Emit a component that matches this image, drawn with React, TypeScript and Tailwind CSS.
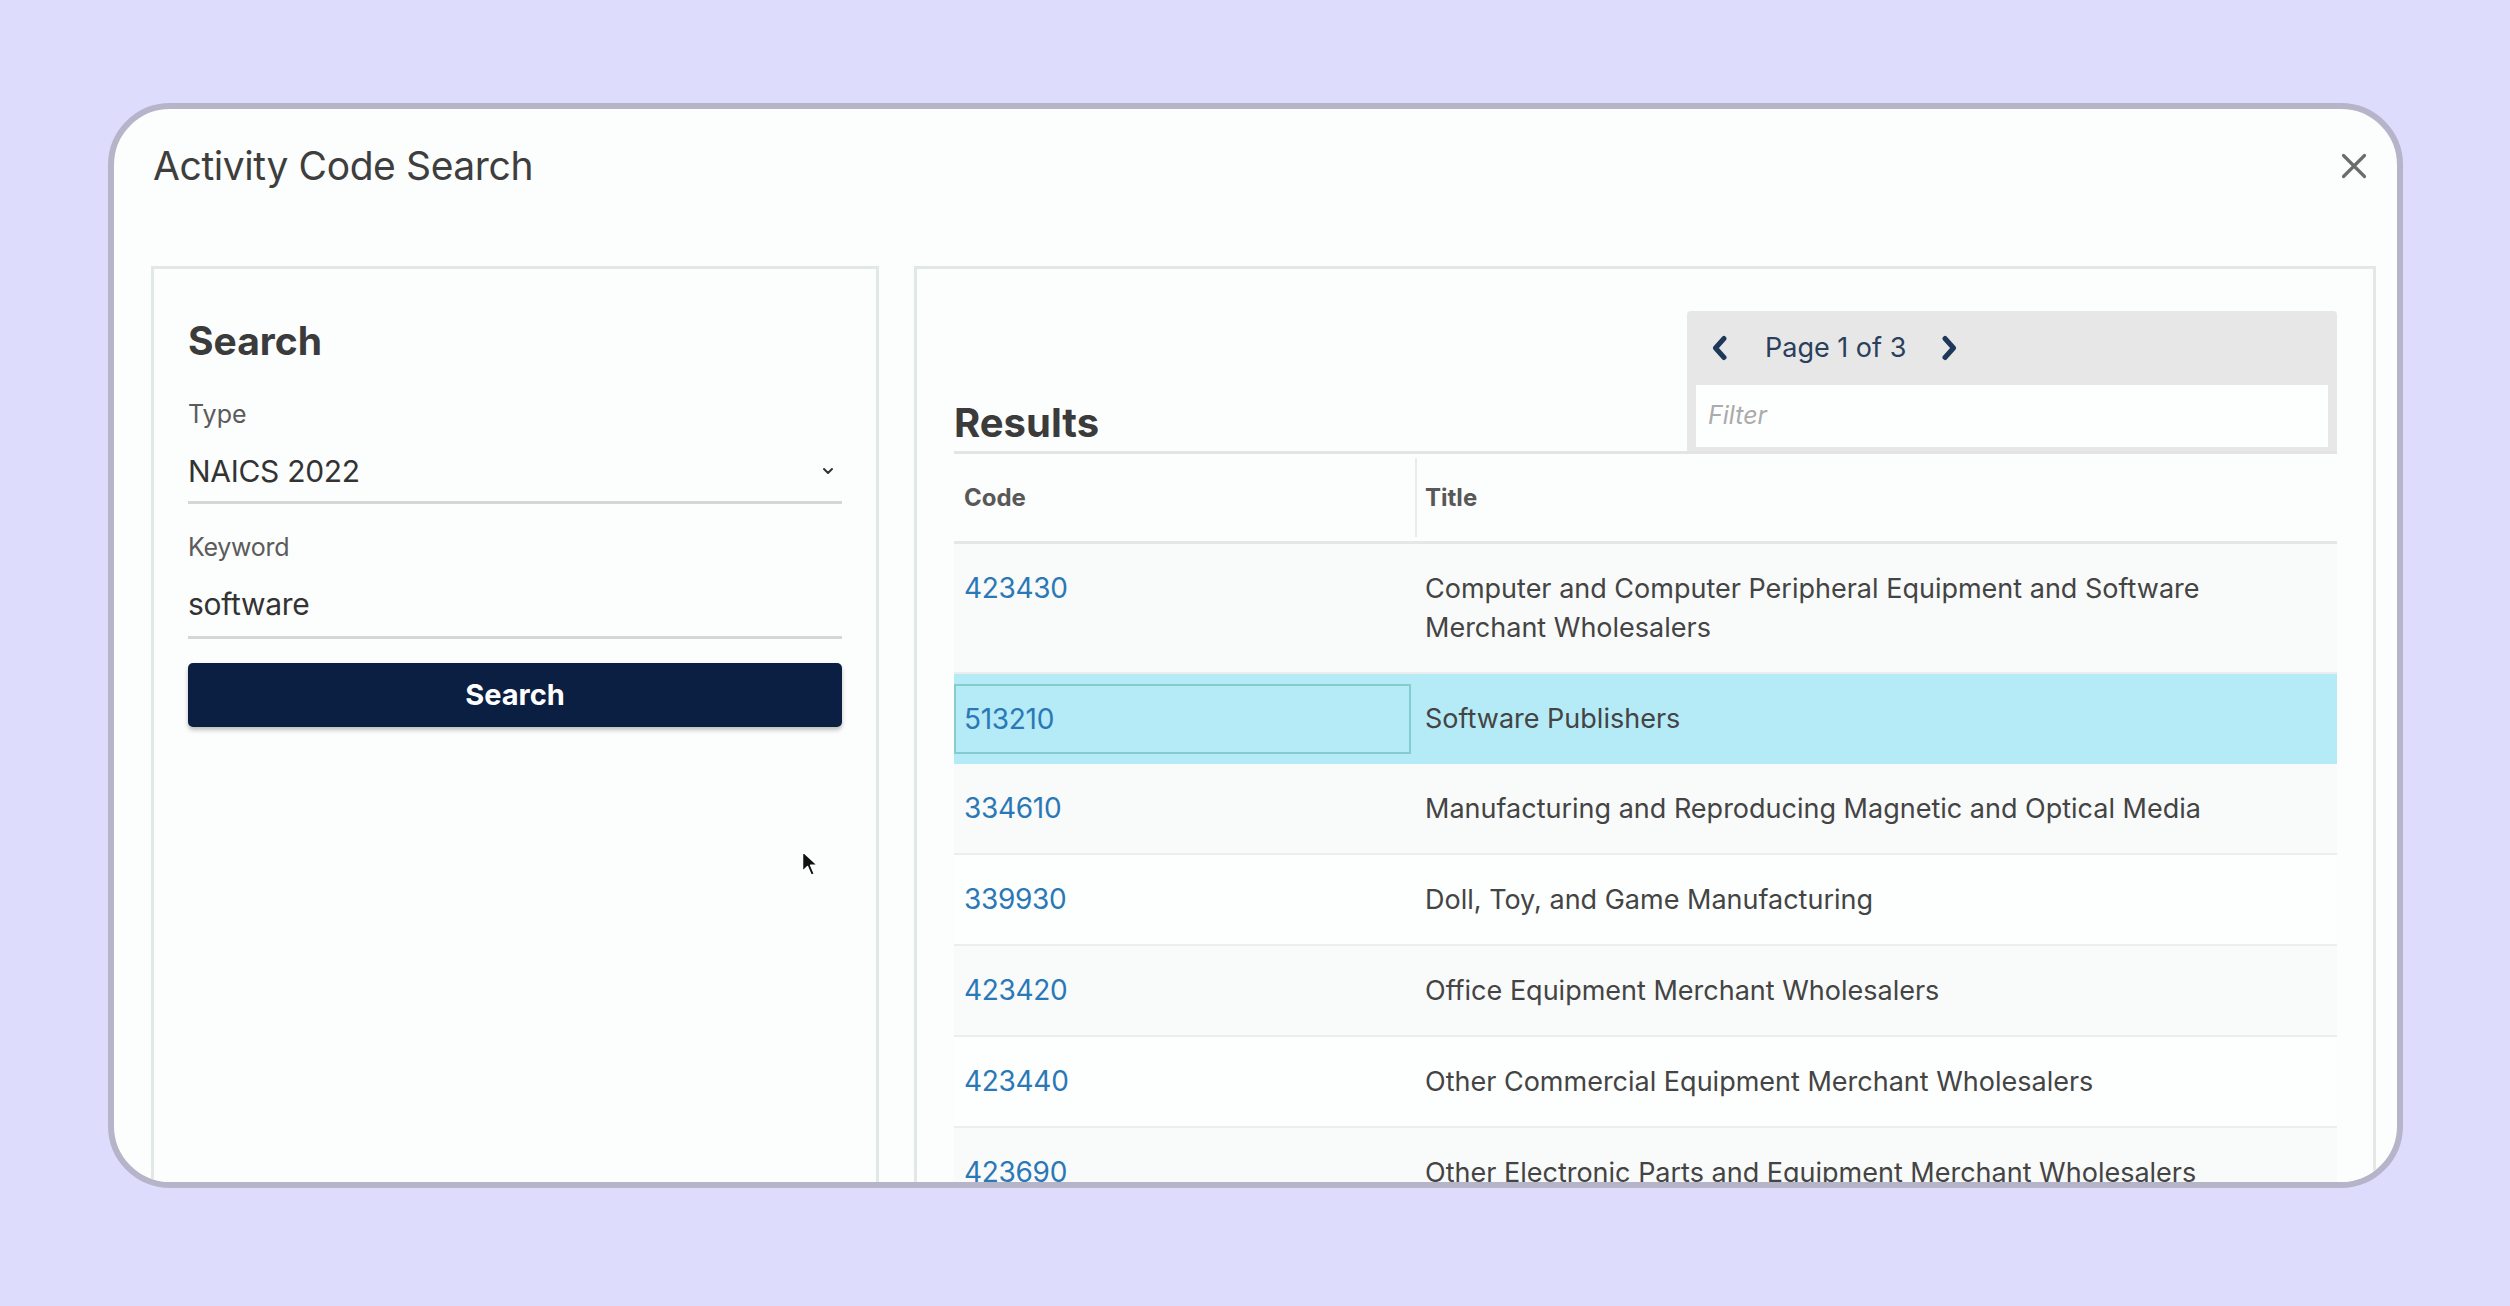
import React from "react";

const rows = [
  { code: "423430", title: "Computer and Computer Peripheral Equipment and Software Merchant Wholesalers" },
  { code: "513210", title: "Software Publishers", active: true },
  { code: "334610", title: "Manufacturing and Reproducing Magnetic and Optical Media" },
  { code: "339930", title: "Doll, Toy, and Game Manufacturing" },
  { code: "423420", title: "Office Equipment Merchant Wholesalers" },
  { code: "423440", title: "Other Commercial Equipment Merchant Wholesalers" },
  { code: "423690", title: "Other Electronic Parts and Equipment Merchant Wholesalers" },
];

function Chevron({ dir }: { dir: "left" | "right" }) {
  return (
    <svg width="20" height="26" viewBox="0 0 20 26" fill="none">
      {dir === "left" ? (
        <path d="M14 3.5 L5.5 13 L14 22.5" stroke="#1f385a" strokeWidth="5" strokeLinecap="round" strokeLinejoin="round" />
      ) : (
        <path d="M6 3.5 L14.5 13 L6 22.5" stroke="#1f385a" strokeWidth="5" strokeLinecap="round" strokeLinejoin="round" />
      )}
    </svg>
  );
}

export default function App() {
  return (
    <div className="w-[2510px] h-[1306px] bg-[#dddcfd] overflow-hidden relative font-['Inter',sans-serif]">
      <div className="ml-[108px] mt-[103px] w-[2295px] h-[1085px] border-[6px] border-[#b5b4c9] rounded-[62px] bg-[#fcfdfd] overflow-hidden flex flex-col">
        {/* Header */}
        <div className="flex items-start justify-between pl-[39px] pr-[30px] pt-[33px]">
          <div className="text-[39px] tracking-[-0.4px] leading-[48px] text-[#3e3e3e]">Activity Code Search</div>
          <svg className="mt-[11px]" width="26" height="26" viewBox="0 0 26 26">
            <path d="M2.5 2.5 L23.5 23.5 M23.5 2.5 L2.5 23.5" stroke="#6c6c6c" strokeWidth="3.2" strokeLinecap="round" />
          </svg>
        </div>

        {/* Panels */}
        <div className="mt-[76px] flex gap-[35px] pl-[37px] pr-[21px]">
          {/* Left panel */}
          <div className="w-[728px] h-[1000px] shrink-0 border-[3px] border-[#e1e8e6] bg-[#fcfdfd] px-[34px] pt-[48px]">
            <div className="text-[39px] font-bold leading-[48px] text-[#3b3b3b]">Search</div>
            <div className="mt-[34px] text-[25px] leading-[30px] text-[#5b5b5b]">Type</div>
            <div className="mt-[24px] pb-[12px] border-b-[3px] border-[#d6d6d6] flex items-center justify-between">
              <span className="text-[30px] tracking-[-0.3px] leading-[36px] text-[#333333]">NAICS 2022</span>
              <svg className="mr-[8px]" width="12" height="8" viewBox="0 0 12 8">
                <path d="M2 2 L6 6 L10 2" stroke="#333" strokeWidth="2" fill="none" strokeLinecap="round" strokeLinejoin="round" />
              </svg>
            </div>
            <div className="mt-[28px] text-[25px] tracking-[-0.3px] leading-[30px] text-[#5b5b5b]">Keyword</div>
            <div className="mt-[24px] pb-[14px] border-b-[3px] border-[#d6d6d6] text-[30px] tracking-[-0.3px] leading-[36px] text-[#333333]">software</div>
            <div className="mt-[24px] h-[64px] rounded-[5px] bg-[#0b1f42] shadow-[0_3px_4px_rgba(0,0,0,0.25)] flex items-center justify-center text-white text-[29px] font-bold">
              Search
            </div>
          </div>

          {/* Right panel */}
          <div className="w-[1462px] h-[1000px] shrink-0 border-[3px] border-[#e1e8e6] bg-[#fcfdfd] pl-[37px] pr-[36px] pt-[42px]">
            <div className="flex items-end justify-between border-b-[3px] border-[#e4e4e4]">
              <div className="pb-[4px] text-[40px] font-bold leading-[48px] text-[#3b3b3b]">Results</div>
              <div className="w-[650px] h-[140px] bg-[#e7e7e7] rounded-t-[4px] flex flex-col">
                <div className="h-[74px] flex items-center pl-[23px]">
                  <Chevron dir="left" />
                  <span className="ml-[35px] text-[27px] text-[#2a3f5c]">Page 1 of 3</span>
                  <span className="ml-[33px]">
                    <Chevron dir="right" />
                  </span>
                </div>
                <div className="mx-[9px] h-[62px] bg-[#fdfefe] flex items-center pl-[12px] text-[25px] italic text-[#ababab]">
                  Filter
                </div>
              </div>
            </div>

            {/* Table header */}
            <div className="flex h-[90px] border-b-[3px] border-[#e6e6e6]">
              <div className="w-[461px] shrink-0 pl-[10px] flex items-center text-[24px] font-bold text-[#585858]">Code</div>
              <div className="my-[4px] border-l-2 border-[#ebebeb] pl-[8px] flex items-center text-[24px] font-bold text-[#585858]">Title</div>
            </div>

            {/* Rows */}
            {rows.map((r, i) =>
              r.active ? (
                <div key={r.code} className="flex h-[90px] bg-[#b5eaf7]">
                  <div className="w-[461px] shrink-0 py-[10px] pr-[4px]">
                    <div className="h-[70px] border-2 border-[#86cbcd] flex items-center pl-[8px] text-[28px] tracking-[-0.3px] text-[#2a78b6]">{r.code}</div>
                  </div>
                  <div className="pl-[10px] flex items-center text-[27px] text-[#444444]">{r.title}</div>
                </div>
              ) : (
                <div
                  key={r.code}
                  className={`flex py-[25px] border-b-2 border-[#ededed] ${i % 2 === 0 ? "bg-[#f9fafa]" : "bg-[#fdfefe]"}`}
                >
                  <div className="w-[461px] shrink-0 pl-[10px] text-[28px] tracking-[-0.3px] leading-[39px] text-[#2a78b6]">{r.code}</div>
                  <div className="pl-[10px] text-[27px] leading-[39px] text-[#444444] max-w-[840px]">{r.title}</div>
                </div>
              )
            )}
          </div>
        </div>
      </div>

      {/* Mouse cursor */}
      <svg className="absolute left-[800px] top-[850px]" width="20" height="28" viewBox="0 0 16 22">
        <path d="M2 1 L2 17 L6 13 L9 20 L11.5 19 L8.5 12 L14 12 Z" fill="#111" stroke="#fff" strokeWidth="1.2" strokeLinejoin="round" />
      </svg>
    </div>
  );
}
